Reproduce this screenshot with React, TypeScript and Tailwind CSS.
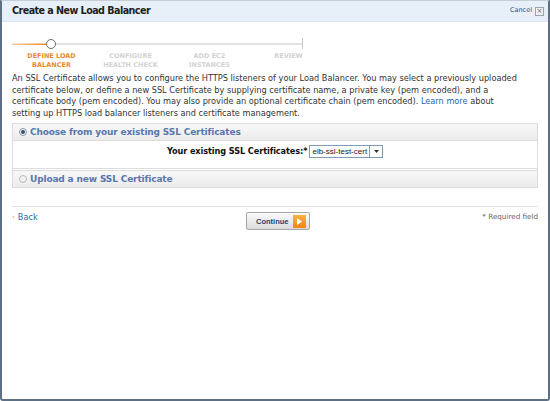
import React from "react";

const font = { fontFamily: '"DejaVu Sans", Verdana, sans-serif' };

function Steps() {
  const labels = [
    ["DEFINE LOAD", "BALANCER"],
    ["CONFIGURE", "HEALTH CHECK"],
    ["ADD EC2", "INSTANCES"],
    ["REVIEW", ""],
  ];
  return (
    <div className="flex flex-col">
      <svg width="296" height="14" viewBox="0 0 296 14" className="block">
        <defs>
          <linearGradient id="og" x1="0" x2="1" y1="0" y2="0">
            <stop offset="0" stopColor="#f5c89a" />
            <stop offset="1" stopColor="#f08a2c" />
          </linearGradient>
        </defs>
        <rect x="0" y="6.5" width="34" height="1.5" fill="url(#og)" />
        <rect x="44" y="6.5" width="247" height="1" fill="#c8c8c8" />
        <rect x="290" y="1" width="1" height="11" fill="#c8c8c8" />
        <circle cx="39" cy="7" r="4.5" fill="#ffffff" stroke="#6b6b6b" strokeWidth="1" />
      </svg>
      <div className="grid grid-cols-[79px_79px_79px_79px] w-[316px] mt-[1px]">
        {labels.map((l, i) => (
          <div
            key={i}
            className={`text-center text-[6.5px] font-bold leading-[9px] ${
              i === 0 ? "text-[#ef8a2e]" : "text-[#d2d2d2]"
            }`}
          >
            <div>{l[0]}</div>
            <div>{l[1]}</div>
          </div>
        ))}
      </div>
    </div>
  );
}

function Radio({ checked }: { checked: boolean }) {
  return (
    <svg width="8" height="8" viewBox="0 0 8 8" className="block">
      <circle cx="4" cy="4" r="3.5" fill="#f2f2f2" stroke={checked ? "#8a9aae" : "#b8b8b8"} strokeWidth="1" />
      {checked && <circle cx="4" cy="4" r="2" fill="#3c4f6b" />}
    </svg>
  );
}

export default function App() {
  return (
    <div
      style={font}
      className="w-[550px] h-[401px] bg-white border-x-2 border-b-2 border-t border-[#5d6f82] border-t-[#c8ced6] rounded-b-[3px] flex flex-col overflow-hidden"
    >
      <div className="h-[21px] bg-[#e7eff9] border-b border-[#dde6f0] flex items-center justify-between pl-[10px] pr-[4px]">
        <div className="text-[9.6px] font-bold text-[#1e1e1e] tracking-[-0.55px]">Create a New Load Balancer</div>
        <div className="flex items-center gap-[3px]">
          <span className="text-[6.5px] text-[#2a4f8a]">Cancel</span>
          <span className="w-[9px] h-[9px] border border-[#9aa4ae] bg-[#eef0f2] flex items-center justify-center text-[7px] leading-none text-[#666]">
            ×
          </span>
        </div>
      </div>

      <div className="flex flex-col px-[10px]">
        <div className="pt-[15px]">
          <Steps />
        </div>

        <div className="mt-[3px] text-[8.2px] leading-[11.6px] text-[#333] whitespace-nowrap">
          <div>
            An SSL Certificate allows you to configure the HTTPS listeners of your Load Balancer. You may select a previously uploaded
          </div>
          <div>
            certificate below, or define a new SSL Certificate by supplying certificate name, a private key (pem encoded), and a
          </div>
          <div>
            certificate body (pem encoded). You may also provide an optional certificate chain (pem encoded).{" "}
            <span className="text-[#2f5fa6]">Learn more</span> about
          </div>
          <div>setting up HTTPS load balancer listeners and certificate management.</div>
        </div>

        <div className="mt-[4px] border border-[#dcdcdc] flex flex-col">
          <div className="h-[17px] bg-gradient-to-b from-[#f8f8f8] to-[#ececec] border-b border-[#dcdcdc] flex items-center gap-[3px] px-[6px]">
            <Radio checked />
            <span className="text-[9px] font-bold text-[#5877ad] tracking-[-0.15px]">Choose from your existing SSL Certificates</span>
          </div>
          <div className="h-[27px] flex items-start justify-center pt-[4px]">
            <span className="text-[8.2px] leading-[13px] font-bold text-[#111] tracking-[-0.1px]">Your existing SSL Certificates:*</span>
            <div className="ml-[2px] flex items-center h-[13px] border border-[#7f9db9] bg-white">
              <span className="px-[2px] text-[8px] leading-none text-[#222] border-r border-[#7f9db9] h-full flex items-center" style={{ fontFamily: '"Liberation Sans", Arial, sans-serif' }}>
                elb-ssl-test-cert
              </span>
              <span className="w-[12px] h-full flex items-center justify-center">
                <svg width="5" height="3" viewBox="0 0 5 3">
                  <path d="M0 0 H5 L2.5 3 Z" fill="#333" />
                </svg>
              </span>
            </div>
          </div>
          <div className="h-[2px] border-t border-[#dcdcdc]" />
          <div className="h-[17px] bg-gradient-to-b from-[#f8f8f8] to-[#ececec] border-t border-[#dcdcdc] flex items-center gap-[3px] px-[6px]">
            <Radio checked={false} />
            <span className="text-[9px] font-bold text-[#5877ad] tracking-[-0.15px]">Upload a new SSL Certificate</span>
          </div>
        </div>

        <div className="mt-[18px] border-t border-[#e2e2e2]" />

        <div className="flex items-start justify-between">
          <div className="flex items-center gap-[3px] pt-[4px] w-[126px]">
            <span className="text-[7px] text-[#ef8a2e]">‹</span>
            <span className="text-[8.2px] text-[#3a64a8]">Back</span>
          </div>
          <div className="mt-[5px] h-[18px] w-[64px] border border-[#a6a6a6] rounded-[2px] bg-gradient-to-b from-[#fbfbfb] to-[#dcdcdc] flex items-center justify-between pl-[9px] pr-[3px]">
            <span className="text-[7.5px] font-bold text-[#1f3f70]" style={{ fontFamily: '"Liberation Sans", Arial, sans-serif' }}>
              Continue
            </span>
            <span className="w-[13px] h-[13px] bg-gradient-to-b from-[#fbb040] to-[#f0870e] flex items-center justify-center">
              <svg width="5" height="7" viewBox="0 0 5 7">
                <path d="M0 0 L5 3.5 L0 7 Z" fill="#ffffff" />
              </svg>
            </span>
          </div>
          <div className="w-[120px] text-right pt-[5px] text-[7.2px] text-[#666]">* Required field</div>
        </div>
      </div>
    </div>
  );
}
